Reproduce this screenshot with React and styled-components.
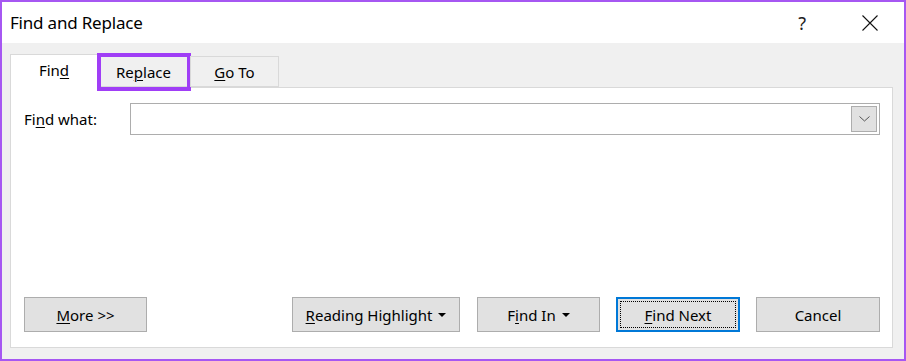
import React from "react";
import styled, { createGlobalStyle } from "styled-components";

const Global = createGlobalStyle`
  html, body { margin: 0; padding: 0; background: #fff; }
  * { box-sizing: border-box; }
`;

const FONT = `"Noto Sans", "Open Sans", "Liberation Sans", sans-serif`;

const Dialog = styled.div`
  width: 906px;
  height: 361px;
  border: 2px solid #a657f2;
  background: #f0f0f0;
  display: flex;
  flex-direction: column;
  font-family: ${FONT};
  color: #000;
`;

const TitleBar = styled.div`
  height: 41px;
  background: #fff;
  display: flex;
  align-items: center;
  padding: 0 26px 0 8px;
`;

const Title = styled.div`
  font-size: 17px;
  flex: 1;
  letter-spacing: -0.2px;
`;

const Controls = styled.div`
  display: flex;
  align-items: center;
  gap: 56px;
`;

const Help = styled.span`
  font-size: 18px;
  color: #222;
  line-height: 1;
`;

const Body = styled.div`
  flex: 1;
  display: flex;
  flex-direction: column;
  padding: 11px 11px 11px 8px;
`;

const Tabs = styled.div`
  display: flex;
  align-items: flex-end;
  height: 33px;
  position: relative;
  z-index: 1;
`;

const Tab = styled.div`
  position: relative;
  width: ${(p) => p.$w}px;
  height: ${(p) => (p.$active ? 34 : 31)}px;
  margin-bottom: ${(p) => (p.$active ? -1 : 0)}px;
  background: ${(p) => (p.$active ? "#fff" : "#f0f0f0")};
  border: 1px solid #d9d9d9;
  border-bottom: ${(p) => (p.$active ? "none" : "1px solid #d9d9d9")};
  border-left: ${(p) => (p.$noLeft ? "none" : "1px solid #d9d9d9")};
  display: flex;
  align-items: center;
  justify-content: center;
  font-size: 15px;
  padding-bottom: ${(p) => (p.$active ? 3 : 0)}px;
`;

const Highlight = styled.div`
  position: absolute;
  top: -4px;
  left: -1px;
  right: -2px;
  bottom: -5px;
  border: 4px solid #a03ef6;
  pointer-events: none;
`;

const U = styled.span`
  text-decoration: underline;
  text-underline-offset: 2px;
  text-decoration-thickness: 1px;
`;

const Panel = styled.div`
  flex: 1;
  background: #fff;
  border: 1px solid #d9d9d9;
  display: flex;
  flex-direction: column;
  justify-content: space-between;
  padding: 15px 12px 15px 13px;
`;

const FieldRow = styled.div`
  display: flex;
  align-items: center;
`;

const Label = styled.label`
  width: 106px;
  font-size: 15px;
`;

const ComboBox = styled.div`
  flex: 1;
  height: 32px;
  border: 1px solid #adadad;
  display: flex;
  justify-content: flex-end;
  align-items: stretch;
  padding: 2px;
`;

const DropButton = styled.div`
  width: 26px;
  background: #e1e1e1;
  border: 1px solid #adadad;
  display: flex;
  align-items: center;
  justify-content: center;
`;

const ButtonRow = styled.div`
  display: flex;
  align-items: center;
`;

const RightGroup = styled.div`
  margin-left: auto;
  display: flex;
  gap: 16px;
`;

const Button = styled.button`
  width: ${(p) => p.$w}px;
  height: 35px;
  background: #e1e1e1;
  border: ${(p) => (p.$default ? "2px solid #0078d7" : "1px solid #adadad")};
  font-family: ${FONT};
  font-size: 15px;
  color: #000;
  display: flex;
  align-items: center;
  justify-content: center;
  gap: 6px;
  padding: 0;
  position: relative;
  margin-left: ${(p) => p.$ml || 0}px;
`;

const FocusRect = styled.span`
  position: absolute;
  inset: 2px;
  border: 1px dotted #000;
  pointer-events: none;
`;

const Caret = () => (
  <svg width="8" height="4" viewBox="0 0 8 4">
    <path d="M0 0 H8 L4 4 Z" fill="#000" />
  </svg>
);

const Chevron = () => (
  <svg width="11" height="6" viewBox="0 0 11 6">
    <path d="M0.5 0.5 L5.5 5 L10.5 0.5" fill="none" stroke="#555" strokeWidth="1" />
  </svg>
);

const CloseIcon = () => (
  <svg width="16" height="16" viewBox="0 0 16 16">
    <path d="M0.5 0.5 L15.5 15.5 M15.5 0.5 L0.5 15.5" stroke="#111" strokeWidth="1.1" />
  </svg>
);

export default function App() {
  return (
    <>
      <Global />
      <Dialog>
        <TitleBar>
          <Title>Find and Replace</Title>
          <Controls>
            <Help>?</Help>
            <CloseIcon />
          </Controls>
        </TitleBar>
        <Body>
          <Tabs>
            <Tab $active $w={88}>
              <span>
                Fin<U>d</U>
              </span>
            </Tab>
            <Tab $w={92} $noLeft>
              <span>
                Re<U>p</U>lace
              </span>
              <Highlight />
            </Tab>
            <Tab $w={89}>
              <span>
                <U>G</U>o To
              </span>
            </Tab>
          </Tabs>
          <Panel>
            <FieldRow>
              <Label>
                Fi<U>n</U>d what:
              </Label>
              <ComboBox>
                <DropButton>
                  <Chevron />
                </DropButton>
              </ComboBox>
            </FieldRow>
            <ButtonRow>
              <Button $w={123}>
                <span>
                  <U>M</U>ore &gt;&gt;
                </span>
              </Button>
              <RightGroup>
                <Button $w={168} style={{ marginRight: 1 }}>
                  <span>
                    <U>R</U>eading Highlight
                  </span>
                  <Caret />
                </Button>
                <Button $w={123}>
                  <span>
                    F<U>i</U>nd In
                  </span>
                  <Caret />
                </Button>
                <Button $w={124} $default>
                  <span>
                    <U>F</U>ind Next
                  </span>
                  <FocusRect />
                </Button>
                <Button $w={124}>Cancel</Button>
              </RightGroup>
            </ButtonRow>
          </Panel>
        </Body>
      </Dialog>
    </>
  );
}
